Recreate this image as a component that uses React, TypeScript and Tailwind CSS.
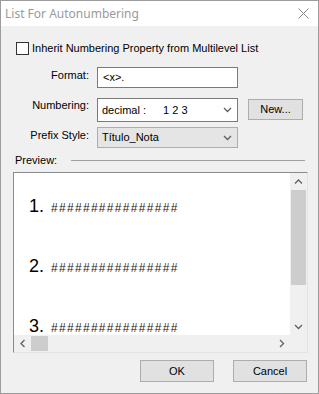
import React from "react";

const ui = { fontFamily: '"Liberation Sans", Arial, sans-serif' };

function Chevron({ dir = "down" }: { dir?: "down" | "up" | "left" | "right" }) {
  const pts = {
    down: "1,1 4.5,4.5 8,1",
    up: "1,4.5 4.5,1 8,4.5",
    left: "4.5,1 1,4.5 4.5,8",
    right: "1,1 4.5,4.5 1,8",
  }[dir];
  const vertical = dir === "down" || dir === "up";
  return (
    <svg
      width={vertical ? 9 : 6}
      height={vertical ? 6 : 9}
      viewBox={vertical ? "0 0 9 6" : "0 0 6 9"}
      className="block"
    >
      <polyline points={pts} fill="none" stroke="#606060" strokeWidth="1.3" />
    </svg>
  );
}

function Row({ label, pt, children }: { label: string; pt: string; children: React.ReactNode }) {
  return (
    <div className="flex items-start">
      <div className={`w-[88px] text-right text-[11px] leading-[13px] text-black ${pt}`}>{label}</div>
      <div className="ml-[8px] flex items-start">{children}</div>
    </div>
  );
}

function PreviewItem({ n }: { n: number }) {
  return (
    <div className="flex h-[20px] items-baseline pl-[15px] leading-[20px]">
      <span className="text-[18px] text-black" style={ui}>{n}.</span>
      <span className="ml-[7px] text-[12px] tracking-[1.3px] text-[#222]" style={ui}>
        ################
      </span>
    </div>
  );
}

export default function App() {
  return (
    <div className="flex h-[394px] w-[319px] flex-col border border-[#9c9c9c] bg-[#f0f0f0]" style={ui}>
      <div className="flex h-[25px] items-center justify-between bg-white pl-[4px] pr-[9px]">
        <span className="text-[12px] text-[#9a9a9a]" style={{ fontFamily: '"Noto Sans", sans-serif' }}>
          List For Autonumbering
        </span>
        <svg width="11" height="11" viewBox="0 0 11 11">
          <path d="M0.5 0.5 L10.5 10.5 M10.5 0.5 L0.5 10.5" stroke="#8a8a8a" strokeWidth="1" />
        </svg>
      </div>

      <div className="flex flex-1 flex-col">
        <div className="mt-[16px] flex items-center pl-[15px]">
          <div className="h-[13px] w-[13px] border border-[#333] bg-white" />
          <span className="ml-[3px] text-[11px] leading-[13px] text-black">
            Inherit Numbering Property from Multilevel List
          </span>
        </div>

        <div className="mt-[12px]">
          <Row label="Format:" pt="pt-[2px]">
            <div className="flex h-[21px] w-[141px] items-center border border-[#7a7a7a] bg-white pl-[5px] text-[11px]">
              &lt;x&gt;.
            </div>
          </Row>
        </div>

        <div className="mt-[10px]">
          <Row label="Numbering:" pt="pt-[1px]">
            <div className="flex h-[24px] w-[141px] items-center border border-[#7a7a7a] bg-white pl-[4px] pr-[5px] text-[11px]">
              <span>decimal :</span>
              <span className="ml-[17px]">1 2 3</span>
              <span className="ml-auto">
                <Chevron />
              </span>
            </div>
            <button className="ml-[10px] mt-[1px] h-[21px] w-[55px] border border-[#adadad] bg-[#e1e1e1] text-[11px] text-black">
              New...
            </button>
          </Row>
        </div>

        <div className="mt-[5px]">
          <Row label="Prefix Style:" pt="pt-[2px]">
            <div className="flex h-[21px] w-[141px] items-center border border-[#adadad] bg-[#e5e5e5] pl-[4px] pr-[5px] text-[11px]">
              <span>Título_Nota</span>
              <span className="ml-auto">
                <Chevron />
              </span>
            </div>
          </Row>
        </div>

        <div className="mt-[5px] flex h-[14px] items-center pl-[14px]">
          <span className="text-[11px] leading-[14px] text-black">Preview:</span>
          <div className="ml-[14px] mr-[13px] h-px flex-1 bg-[#a0a0a0]" />
        </div>

        <div className="ml-[12px] mt-[5px] flex h-[181px] w-[295px] flex-col border-b border-l border-r border-t border-b-[#e3e3e3] border-l-[#8a8a8a] border-r-[#e3e3e3] border-t-[#8a8a8a]">
          <div className="flex flex-1 min-h-0">
            <div className="flex flex-1 flex-col gap-[40px] overflow-hidden bg-white pt-[23px]">
              <PreviewItem n={1} />
              <PreviewItem n={2} />
              <PreviewItem n={3} />
            </div>
            <div className="flex w-[17px] flex-col bg-[#f0f0f0]">
              <div className="flex h-[17px] items-center justify-center">
                <Chevron dir="up" />
              </div>
              <div className="mx-[1px] h-[95px] bg-[#cdcdcd]" />
              <div className="flex-1" />
              <div className="flex h-[17px] items-center justify-center">
                <Chevron dir="down" />
              </div>
            </div>
          </div>
          <div className="flex h-[17px] bg-[#f0f0f0]">
            <div className="flex w-[17px] items-center justify-center">
              <Chevron dir="left" />
            </div>
            <div className="my-[1px] w-[17px] bg-[#cdcdcd]" />
            <div className="flex-1" />
            <div className="flex w-[17px] items-center justify-center">
              <Chevron dir="right" />
            </div>
            <div className="w-[17px]" />
          </div>
        </div>

        <div className="mt-[7px] flex justify-end gap-[19px] pr-[11px]">
          <button className="h-[22px] w-[74px] border border-[#adadad] bg-[#e1e1e1] text-[11px] text-black">
            OK
          </button>
          <button className="h-[22px] w-[74px] border border-[#adadad] bg-[#e1e1e1] text-[11px] text-black">
            Cancel
          </button>
        </div>
      </div>
    </div>
  );
}
